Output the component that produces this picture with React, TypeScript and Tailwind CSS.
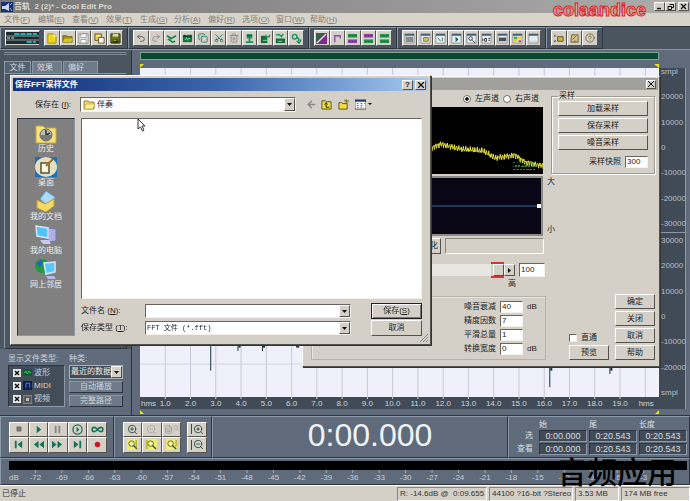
import type { ReactNode } from "react";
import {
  ArrowLeft, CircleHelp, Copy, FileText, Infinity as Loop, Pause, Redo2, Scissors, Square, Trash2, Undo2,
  ZoomIn, ZoomOut, Search,
} from "lucide-react";

const raised = "border border-t-white border-l-white border-b-[#55534e] border-r-[#55534e] bg-[#d4d0c8]";
const sunken = "border border-t-[#66645f] border-l-[#66645f] border-b-[#f4f2ec] border-r-[#f4f2ec] bg-white";
const groove = "border border-t-[#8b98a8] border-l-[#8b98a8] border-b-[#2b343f] border-r-[#2b343f]";
const inset = "border border-t-[#2b343f] border-l-[#2b343f] border-b-[#8b98a8] border-r-[#8b98a8]";

function Svg({ children, size = 11 }: { children: ReactNode; size?: number }) {
  return (
    <svg width={size} height={size} viewBox="0 0 12 12" aria-hidden="true">
      {children}
    </svg>
  );
}

const greenClip = (
  <Svg>
    <rect x="1" y="2" width="10" height="8" fill="#15733f" />
    <path d="M1 4h10M3 2v2M9 2v2" stroke="#0a4022" />
    <path d="M3 7h1l1-2 1 3 1-2h2" stroke="#5fd690" fill="none" />
  </Svg>
);
const mixClip = (
  <Svg>
    <path d="M1 3h7v8H1z" fill="#146c3c" />
    <path d="M6 1l2 3 3-3v4H6z" fill="#1c9a5a" />
    <path d="M3 8h5" stroke="#7fe0a4" />
  </Svg>
);
const insertClip = (
  <Svg>
    <path d="M1 6h10v5H1z" fill="#146c3c" />
    <path d="M1 2h4l2 2 2-3" stroke="#1c9a5a" strokeWidth="1.600" fill="none" />
    <path d="M3 9h5" stroke="#7fe0a4" />
  </Svg>
);
const micClip = (
  <Svg>
    <path d="M3 1h6v5H3zM5 6h2v3H5zM2 9h8v2H2z" fill="#1c9460" />
    <path d="M3 3h6" stroke="#0b4b2c" />
  </Svg>
);

const fileTools: { label: string; icon: ReactNode }[] = [
  { label: "新建", icon: <Svg><path d="M2 1h6l3 3v7H2z" fill="#f0d818" stroke="#9c8a10" /><path d="M8 1v3h3" fill="#fff6a0" /></Svg> },
  { label: "打开", icon: <Svg><path d="M1 3h4l1 1h5v6H1z" fill="#a49016" stroke="#6b5f10" /><path d="M3 6h9l-2 4H1z" fill="#d8c42c" /></Svg> },
  { label: "保存", icon: <Svg><path d="M1 1h10v10H1z" fill="#ececec" stroke="#8b8b8b" /><path d="M3 1h6v4H3zM3 7h6v4H3z" fill="#fff" stroke="#9b9b9b" /></Svg> },
  { label: "另存为", icon: <Svg><path d="M1 1h7v7H1z" fill="#e6cf50" stroke="#5c5120" /><path d="M5 5h6v6H5z" fill="#fff" stroke="#5c5120" /><path d="M3 3h4" stroke="#fff" /></Svg> },
  { label: "全部保存", icon: <Svg><path d="M1 1h10v10H1z" fill="#6e7420" stroke="#2c3010" /><path d="M3 1h6v3H3z" fill="#d8d890" /><path d="M3 7h6v4H3z" fill="#27340c" /><path d="M4 8h3" stroke="#e0dc30" /></Svg> },
];

const editTools: { label: string; icon: ReactNode }[] = [
  { label: "撤消", icon: <Undo2 size={10} color="#555" /> },
  { label: "重做", icon: <Redo2 size={10} color="#888" /> },
  { label: "修剪", icon: <Svg><path d="M1 3l5 3 5-3M6 6l-3 1 4 3 3-1" stroke="#12804e" fill="none" strokeWidth="1.600" /></Svg> },
  { label: "选区", icon: greenClip },
  { label: "复制", icon: <Copy size={10} color="#1c8064" /> },
  { label: "剪切", icon: <Scissors size={10} color="#1c7058" className="-rotate-90" /> },
  { label: "删除", icon: <Trash2 size={10} color="#888" /> },
  { label: "录入", icon: micClip },
  { label: "混合", icon: mixClip },
  { label: "插入", icon: insertClip },
  { label: "转换", icon: <Svg><circle cx="4" cy="4" r="2.500" fill="none" stroke="#1c9460" strokeWidth="1.500" /><path d="M6 5c3 0 3 2 2 4M6 9l3 2 2-4" stroke="#12805a" fill="none" strokeWidth="1.400" /></Svg> },
];

const bars = (a: string, b: string) => (
  <Svg>
    <path d="M1 1h10v4H1z" fill={a} />
    <path d="M1 7h10v4H1z" fill={b} />
    <path d="M2 3h8M2 9h8" stroke="#224438" strokeDasharray="2 1" />
  </Svg>
);
const effectTools: { label: string; icon: ReactNode }[] = [
  { label: "反相", icon: <Svg><path d="M0 0h12v12H0z" fill="#7c2c8c" /><path d="M0 12L12 0H0z" fill="#396048" /><path d="M1 11L11 1" stroke="#f0d8f4" strokeWidth="1.500" /></Svg> },
  { label: "包络", icon: <Svg><path d="M3 10V3h6v3" stroke="#8c4ca8" fill="none" strokeWidth="1.500" /></Svg> },
  { label: "左声道", icon: bars("#289c54", "#9648a8") },
  { label: "右声道", icon: bars("#9648a8", "#289c54") },
  { label: "双声道", icon: bars("#289c54", "#289c54") },
];

const win = (inner: ReactNode) => (
  <Svg>
    <path d="M1 1h10v10H1z" fill="#e9edf0" stroke="#8c959c" />
    <path d="M1 2h10" stroke="#456078" strokeWidth="2" />
    {inner}
  </Svg>
);
const viewTools: { label: string; icon: ReactNode }[] = [
  { label: "文件窗口", icon: win(<path d="M2 4h8v6H2z" fill="#8c8c86" />) },
  { label: "提示", icon: win(<path d="M4 5h5v4H4z" fill="#d8c864" stroke="#807428" />) },
  { label: "播放列表", icon: win(<path d="M3 5l3 4M8 5v4" stroke="#3c7c5c" />) },
  { label: "播放控制", icon: win(<path d="M5 4l3 3-3 3z" fill="#105c5c" />) },
  { label: "缩放", icon: win(<><circle cx="5" cy="6" r="2" fill="none" stroke="#333" /><path d="M7 8l3 3" stroke="#333" /></>) },
  { label: "时间", icon: win(<path d="M2 6v3M4 6h2v3H4zM8 6h2M8 8h2" stroke="#333" fill="none" />) },
  { label: "选择", icon: win(<path d="M2 5h8v4H2z" fill="#4b5052" />) },
  { label: "频谱", icon: win(<><path d="M2 4h4v3H2z" fill="#37b060" /><path d="M6 4h4v3H6z" fill="#e8d41c" /><path d="M2 7h4v3H2z" fill="#e8d41c" /><path d="M7 8h3v2H7z" fill="#d84040" /></>) },
  { label: "状态栏", icon: win(<path d="M2 9h8" stroke="#c8cccf" />) },
];
const helpTools: { label: string; icon: ReactNode }[] = [
  { label: "选项", icon: <Svg><path d="M1 2l2 2M3 2L1 4M1 8l2 2M3 8l-2 2" stroke="#555" /><path d="M5 4h6v5H5z" fill="#ccb83c" stroke="#5c5420" /></Svg> },
  { label: "脚本", icon: <Svg><path d="M3 2h7v8H2z" fill="#d8c088" stroke="#705c30" /><path d="M4 7l4-4M5 9h3" stroke="#705c30" /></Svg> },
  { label: "帮助", icon: <CircleHelp size={10} color="#6a6424" /> },
];

function ToolGroup({ tools, width, before }: { tools: { label: string; icon: ReactNode }[]; width: string; before?: ReactNode }) {
  return (
    <div className={`flex items-center gap-1 px-1 ${groove}`}>
      {before}
      <div className={`flex h-4 ${width}`}>
        {tools.map((t) => (
          <button key={t.label} aria-label={t.label} className={`flex min-w-0 flex-1 items-center justify-center overflow-hidden ${raised}`}>
            {t.icon}
          </button>
        ))}
      </div>
    </div>
  );
}

function TitleBar() {
  return (
    <header className="flex h-[13px] items-center bg-linear-to-r from-[#777] to-[#adadab] px-px">
      <svg width="12" height="10" viewBox="0 0 12 10" aria-hidden="true">
        <path d="M0 0h12v10H0z" fill="#1b2c78" />
        <path d="M1 4h3l4-3v8L4 7H1z" fill="#c8d6ee" />
        <path d="M9 3l2-2M9 6l2 3" stroke="#8ab0ec" />
      </svg>
      <h1 className="ml-px flex-1 whitespace-pre font-bold text-[#dcdad4]">音轨  2 (2)* - Cool Edit Pro</h1>
      <div className="flex">
        {["最小化", "还原", "关闭"].map((label, i) => (
          <button key={label} aria-label={label} className={`flex h-[9px] w-[11px] items-center justify-center ${raised} ${i === 2 ? "ml-0.5" : ""}`}>
            <svg width="7" height="7" viewBox="0 0 7 7" fill="none" stroke="#111" aria-hidden="true">
              {i === 0 && <path d="M1 5.500h4" strokeWidth="1.500" />}
              {i === 1 && <path d="M2.500 1.500h4v3h-2M1 3.500h3.500v3H1z" />}
              {i === 2 && <path d="M1 1l5 5M6 1L1 6" strokeWidth="1.300" />}
            </svg>
          </button>
        ))}
      </div>
    </header>
  );
}

const menus = ["文件(F)", "编辑(E)", "查看(V)", "效果(T)", "生成(G)", "分析(A)", "偏好(R)", "选项(O)", "窗口(W)", "帮助(H)"];

function MenuBar() {
  return (
    <nav className="flex h-[13px] items-center bg-[#d8d4ca] pl-1 text-[#858179]">
      {menus.map((m) => (
        <button key={m} className="w-[34px] shrink-0 whitespace-nowrap text-left">
          {m.slice(0, 3)}<u>{m.slice(3, 4)}</u>)
        </button>
      ))}
    </nav>
  );
}

function Toolbar() {
  return (
    <div className="flex h-[23px] border-t border-[#2b343f] bg-[#4b555f]">
      <ToolGroup
        tools={fileTools}
        width="w-[79px]"
        before={
          <button aria-label="切换多轨" className={`h-4 w-[35px] ${raised}`}>
            <svg width="100%" height="12" viewBox="0 0 32 12" preserveAspectRatio="none" aria-hidden="true">
              <path d="M0 0h32v12H0z" fill="#1d2b30" />
              <path d="M0 4h32M0 8h32" stroke="#8fa0a4" />
              <path d="M8 2h22M20 10h9" stroke="#25b3a8" strokeWidth="2" strokeDasharray="5 1" />
              <path d="M1 6h8" stroke="#ddd" strokeDasharray="3 1" />
            </svg>
          </button>
        }
      />
      <ToolGroup tools={editTools} width="w-[171px]" />
      <ToolGroup tools={effectTools} width="w-[78px]" />
      <ToolGroup tools={viewTools} width="w-[139px]" />
      <ToolGroup tools={helpTools} width="w-[47px]" />
    </div>
  );
}

const fileKinds = [
  { name: "波形", icon: <Svg size={9}><path d="M0 2h12v8H0z" fill="#0b5a2c" /><path d="M1 6h2l1-2 2 4 2-4 1 2h2" stroke="#43d878" fill="none" /></Svg> },
  { name: "MIDI", icon: <Svg size={9}><path d="M0 0h12v12H0z" fill="#0c1c50" /><path d="M4 9V3h5v6" stroke="#7494e0" fill="none" /></Svg> },
  { name: "视频", icon: <Svg size={9}><path d="M0 1h12v10H0z" fill="#555" stroke="#aaa" /><path d="M4 4h4v4H4z" fill="#bbb" /></Svg> },
];

function DropArrow() {
  return (
    <span className={`pointer-events-none flex w-[11px] shrink-0 items-center justify-center self-stretch ${raised}`}>
      <svg width="5" height="3" viewBox="0 0 5 3" aria-hidden="true"><path d="M0 0h5L2.500 3z" fill="#111" /></svg>
    </span>
  );
}

function Organizer() {
  return (
    <aside className="flex w-[132px] shrink-0 flex-col border-r border-[#2b343f] bg-[#4b555f] px-1">
      <div className="my-0.5 h-[3px] border-y border-[#7d8997]" />
      <div className="mt-1 flex h-3 gap-px text-[#d4d8dc]">
        <button className="w-[27px] border border-b-0 border-[#8b98a8] bg-[#566170]">文件</button>
        <button className="w-[30px] border border-b-0 border-[#8b98a8] bg-[#6e7a89] pl-1 text-left">效果</button>
        <button className="w-[35px] border border-b-0 border-[#8b98a8] bg-[#6e7a89] pl-1 text-left">偏好</button>
      </div>
      <div className={`flex-1 bg-[#4b555f] ${groove}`} />
      <div className="-mx-1 flex gap-1 bg-[#5f6b7a] px-2 pt-1 pb-2 text-[#cdd2d8]">
        <div className="w-[57px]">
          <p className="h-3 whitespace-nowrap">显示文件类型:</p>
          <div className={`flex h-[42px] flex-col justify-around bg-[#434c59] px-1 ${inset}`}>
            {fileKinds.map((k) => (
              <label key={k.name} className="flex items-center gap-0.5">
                <input type="checkbox" defaultChecked className="peer sr-only" />
                <svg width="8" height="8" viewBox="0 0 8 8" aria-hidden="true">
                  <path d="M0 0h8v8H0z" fill="#e8e8e4" />
                  <path d="M2 2l4 4M6 2L2 6" stroke="#111" strokeWidth="1.500" />
                </svg>
                {k.icon}
                {k.name}
              </label>
            ))}
          </div>
        </div>
        <div className="w-[54px]">
          <label htmlFor="sort" className="block h-3">种类:</label>
          <div className="flex h-[14px] border border-[#a9b0b8] bg-[#434c59]">
            <select id="sort" className="min-w-0 flex-1 appearance-none overflow-hidden text-clip whitespace-nowrap bg-transparent pl-px text-[#e8eaec]">
              <option>最近的数据</option>
            </select>
            <DropArrow />
          </div>
          <button className={`mt-0.5 block h-3 w-full bg-[#6e7a89] leading-[10px] ${groove}`}>自动播放</button>
          <button className={`mt-0.5 block h-3 w-full bg-[#6e7a89] leading-[10px] ${groove}`}>完整路径</button>
        </div>
      </div>
    </aside>
  );
}

const DURATION = 20.543;
const at = (s: number) => `${(s / DURATION) * 100}%`;
const seconds = Array.from({ length: 20 }, (_, i) => i + 1);
const peaks = [
  { t: 2.8, from: 70, to: 92 }, { t: 3.88, from: 70, to: 86 }, { t: 4.85, from: 70, to: 86 }, { t: 6.2, from: 70, to: 85 },
  { t: 16.22, from: 70, to: 97 }, { t: 18.6, from: 70, to: 93 },
];

function WaveView() {
  return (
    <main className="flex min-w-0 flex-1 flex-col pt-0.5 pl-2">
      <div className="mr-[31px] h-2 border border-[#7ca392] bg-[#0c4830]" />
      <div className="flex h-2 items-end justify-between pr-[31px]">
        <svg width="5" height="4" aria-hidden="true"><path d="M0 0h4L0 4z" fill="#e8e020" /></svg>
        <svg width="5" height="4" aria-hidden="true"><path d="M0 0h5v4z" fill="#e8e020" /></svg>
      </div>
      <div className="flex flex-1">
        <div className="flex min-w-0 flex-1 flex-col">
          <svg className="w-full flex-1 bg-[#f0f0fa]" height="100%" role="img" aria-label="波形">
            {seconds.map((s) => <line key={s} x1={at(s)} x2={at(s)} y1="0" y2="100%" stroke="#c5c8d6" />)}
            {[10, 50, 90].map((y) => <line key={y} x1="0" x2="100%" y1={`${y}%`} y2={`${y}%`} stroke="#d2d4e0" />)}
            {peaks.map((p) => (
              <g key={p.t} stroke="#143440">
                <line x1={at(p.t)} x2={at(p.t)} y1={`${p.from}%`} y2={`${p.to}%`} strokeWidth="1" />
                {p.t > 3 && <line x1={at(p.t + 0.06)} x2={at(p.t + 0.06)} y1={`${p.from}%`} y2={`${Math.min(p.to, p.t > 10 ? 92 : 85)}%`} strokeWidth="2" />}
              </g>
            ))}
          </svg>
          <svg className="h-3 w-full shrink-0 bg-[#414b57]" fill="#d0d4d8" aria-hidden="true">
            <text x="1" y="9">hms</text>
            {seconds.slice(0, 19).map((s) => (
              <g key={s}>
                <line x1={at(s)} x2={at(s)} y1="0" y2="2" stroke="#d0d4d8" />
                <text x={at(s)} y="9" textAnchor="middle">{s}.0</text>
              </g>
            ))}
            <text x="99%" y="9" textAnchor="end">hms</text>
          </svg>
        </div>
        <div className="mr-1 flex w-[27px] shrink-0 flex-col border-r border-[#8b98a8] bg-[#414b57] pb-3 text-[#b8bec6]">
          <div className="flex flex-1 flex-col justify-between border-b border-[#8b98a8] pb-1 pl-0.5 leading-[8px]">
            {["smpl", "20000", "10000", "0", "-10000", "-20000", "-30000"].map((l) => <span key={l}>{l}</span>)}
          </div>
          <div className="flex flex-1 flex-col justify-between pt-1 pl-0.5 leading-[8px]">
            {["30000", "20000", "10000", "0", "-10000", "-20000", "smpl"].map((l) => <span key={l}>{l}</span>)}
          </div>
        </div>
      </div>
      <div className="flex h-1.5 items-center justify-between pr-[31px]">
        <svg width="4" height="4" aria-hidden="true"><path d="M0 0v4h4z" fill="#e8e020" /></svg>
        <svg width="4" height="4" aria-hidden="true"><path d="M4 0v4H0z" fill="#e8e020" /></svg>
      </div>
    </main>
  );
}

const green = "#12745c";
const transport: { label: string; icon: ReactNode }[] = [
  { label: "停止", icon: <Square size={6} fill="#777" color="#777" /> },
  { label: "播放", icon: <Svg><path d="M4 2l5 4-5 4z" fill={green} /></Svg> },
  { label: "暂停", icon: <Svg><path d="M3 2h2v8H3zM7 2h2v8H7z" fill="#888" /></Svg> },
  { label: "播放到结尾", icon: <Svg><circle cx="6" cy="6" r="5" fill="none" stroke={green} strokeWidth="1.400" /><path d="M5 3l3 3-3 3z" fill={green} /></Svg> },
  { label: "循环", icon: <Loop size={13} strokeWidth={3} color={green} /> },
  { label: "到开头", icon: <Svg><path d="M2 2h2v8H2zM10 2v8L5 6z" fill={green} /></Svg> },
  { label: "快退", icon: <Svg><path d="M6 2v8L1 6zM12 2v8L7 6z" fill={green} /></Svg> },
  { label: "快进", icon: <Svg><path d="M0 2v8l5-4zM6 2v8l5-4z" fill={green} /></Svg> },
  { label: "到结尾", icon: <Svg><path d="M8 2h2v8H8zM2 2v8l5-4z" fill={green} /></Svg> },
  { label: "录音", icon: <Svg><circle cx="6" cy="6" r="3" fill="#c81824" /></Svg> },
];
const zoomSel = (d: string) => (
  <span className="flex bg-[#f0ec70]">
    <Svg><circle cx="5" cy="5" r="3" fill="#f8f4a0" stroke="#606020" /><path d="M7 7l4 4" stroke="#225844" strokeWidth="1.500" /><path d={d} stroke="#8c8810" /></Svg>
  </span>
);
const zooms: { label: string; icon: ReactNode }[] = [
  { label: "放大", icon: <ZoomIn size={11} color="#2c5048" /> },
  { label: "缩小", icon: <ZoomOut size={11} color="#aaa" /> },
  { label: "全部", icon: <span className="flex"><FileText size={9} color="#999" /><Search size={6} color="#999" /></span> },
  { label: "选区", icon: zoomSel("M10 1v10") },
  { label: "选区左", icon: zoomSel("M1 1v10") },
  { label: "选区右", icon: zoomSel("M11 1v7") },
];

function Pads({ items, className }: { items: { label: string; icon: ReactNode }[]; className: string }) {
  return (
    <div className={`grid h-[31px] shrink-0 grid-rows-2 ${className}`}>
      {items.map((t) => (
        <button key={t.label} aria-label={t.label} className={`flex min-w-0 items-center justify-center overflow-hidden ${raised}`}>{t.icon}</button>
      ))}
    </div>
  );
}

function ControlDeck() {
  const cell = `h-3 bg-[#414b57] text-center text-[9px] leading-[10px] text-[#d8dce0] ${inset}`;
  return (
    <section className="flex h-[43px] shrink-0 border-t border-[#2b343f]">
      <div className={`flex w-[114px] items-center pl-2 ${groove}`}><Pads items={transport} className="w-[98px] grid-cols-5" /></div>
      <div className={`flex w-[98px] items-center gap-1.5 pl-2 ${groove}`}>
        <Pads items={zooms} className="w-[58px] grid-cols-3" />
        <Pads
          className="w-5 grid-cols-1"
          items={[
            { label: "垂直放大", icon: <><span className="h-2.5 w-0.5 border-l border-[#444]" /><ZoomIn size={11} color="#2c5048" /></> },
            { label: "垂直缩小", icon: <><span className="h-2.5 w-0.5 border-l border-[#444]" /><ZoomOut size={11} color="#2c5048" /></> },
          ]}
        />
      </div>
      <output className={`flex flex-1 items-center justify-center pb-1 pl-5 text-[32px] leading-none text-[#f0f2f6] ${groove}`}>0:00.000</output>
      <div className={`flex w-[182px] items-center pl-1 ${groove}`}>
        <table className="w-full table-fixed border-separate border-spacing-x-0.5 border-spacing-y-px text-[#d8dce0]">
          <thead>
            <tr className="h-2.5 text-left leading-[9px]">
              <td className="w-[22px]" />
              {["始", "尾", "长度"].map((h) => <th key={h} className="p-0 font-normal">{h}</th>)}
            </tr>
          </thead>
          <tbody>
            {["选", "查看"].map((r) => (
              <tr key={r}>
                <th className="p-0 pr-1 text-right font-normal leading-[10px]">{r}</th>
                <td className={cell}>0:00.000</td>
                <td className={cell}>0:20.543</td>
                <td className={cell}>0:20.543</td>
              </tr>
            ))}
          </tbody>
        </table>
      </div>
    </section>
  );
}

const levels = Array.from({ length: 24 }, (_, i) => -72 + i * 3);

function LevelMeter() {
  return (
    <section className={`relative h-[27px] shrink-0 pt-0.5 pr-0.5 pl-2 ${groove}`}>
      <div className="h-[9px] bg-black" />
      <svg className="block h-3 w-full" fill="#c8cdd4" aria-hidden="true">
        <text x="0" y="10">dB</text>
        {levels.map((l, i) => {
          const x = `${3.9 + i * 3.9}%`;
          return (
            <g key={l}>
              <line x1={x} x2={x} y1="0" y2="3" stroke="#a8b0ba" />
              <text x={x} y="10" textAnchor="middle">{l}</text>
            </g>
          );
        })}
      </svg>
      <strong className="absolute -top-px right-3 text-[30px] leading-[30px] font-medium text-black">音频应用</strong>
    </section>
  );
}

function StatusBar() {
  const pane = "border border-t-[#88867f] border-l-[#88867f] border-b-white border-r-white pl-0.5 whitespace-pre";
  return (
    <footer className="flex h-4 shrink-0 items-center gap-0.5 border-t border-white bg-[#d4d0c8] pl-0.5 text-[#333]">
      <span className="flex-1">已停止</span>
      <span className={`w-[90px] ${pane}`}>R: -14.6dB @  0:09.655</span>
      <span className={`w-[84px] ${pane}`}>44100 ?16-bit ?Stereo</span>
      <span className={`w-11 ${pane}`}>3.53 MB</span>
      <span className={`w-[69px] ${pane}`}>174 MB free</span>
    </footer>
  );
}

const envelope = [[0, 42], [40, 36], [80, 40], [121, 41], [130, 37], [150, 42], [173, 44], [185, 51], [205, 48], [215, 55], [233, 59]];
function noiseAt(x: number) {
  const i = Math.max(1, envelope.findIndex((p) => p[0] >= x));
  const [x0, y0] = envelope[i - 1];
  const [x1, y1] = envelope[i];
  return y0 + ((y1 - y0) * (x - x0)) / (x1 - x0) + Math.sin(x * 2.7) * 1.8 + Math.sin(x * 7.1) * 1.6;
}
const noiseTrace = Array.from({ length: 467 }, (_, i) => `${i / 2},${noiseAt(i / 2).toFixed(1)}`).join(" ");
const specks = Array.from({ length: 60 }, (_, i) => ({ x: 203 + ((i * 17) % 23), y: 55 + ((i * i * 7) % 12) }));

function NoiseDialog() {
  const btn = `h-[15px] w-10 ${raised}`;
  const field = `h-3 w-[23px] px-px ${sunken}`;
  return (
    <section role="dialog" aria-label="降噪器" className={`absolute top-[76px] left-[302px] flex w-[358px] flex-col pb-1.5 shadow-[1px_1px_0_#333] ${raised}`}>
      <div className="m-px flex h-3 items-center justify-end bg-[#a2a09d] pr-0.5">
        <button aria-label="关闭" className={`flex h-[9px] w-2.5 items-center justify-center ${raised}`}>
          <svg width="6" height="6" viewBox="0 0 6 6" aria-hidden="true"><path d="M0 0l6 6M6 0L0 6" stroke="#111" /></svg>
        </button>
      </div>
      <div className="flex gap-2 pl-2">
        <div className="w-[232px]">
          <div className="flex h-4 items-center justify-end gap-1 pr-1">
            {["左声道", "右声道"].map((c, i) => (
              <label key={c} className="flex items-center gap-1">
                <input type="radio" name="channel" defaultChecked={i === 0} className="size-2 appearance-none rounded-full border border-[#777] bg-white bg-clip-padding checked:bg-[radial-gradient(#111_35%,#fff_45%)]" />
                {c}
              </label>
            ))}
          </div>
          <svg className="block h-[67px] w-full bg-black" viewBox="0 0 233 67" preserveAspectRatio="none" role="img" aria-label="噪音频谱">
            <polyline points={noiseTrace} fill="none" stroke="#e4e03c" strokeWidth="1" />
            {specks.map((s, i) => <rect key={i} x={s.x} y={s.y} width="1" height="1" fill="#2c8c3c" />)}
          </svg>
        </div>
        <fieldset className="h-[83px] w-[104px] border border-[#9d9a92] px-1.5 shadow-[inset_1px_1px_0_#fff,1px_1px_0_#fff]">
          <legend className="ml-0 px-px leading-[10px]">采样</legend>
          <div className="flex flex-col gap-0.5">
            {["加载采样", "保存采样", "噪音采样"].map((b) => <button key={b} className={`h-[15px] ${raised}`}>{b}</button>)}
            <label className="mt-1 flex items-center justify-end gap-1">采样快照 <input defaultValue="300" className={field} /></label>
          </div>
        </fieldset>
      </div>
      <div className="mt-0.5 flex gap-1 pl-2">
        <svg className="h-[60px] w-[232px] border-2 border-[#8c8a86] bg-[#090716]" role="img" aria-label="降噪曲线">
          <line x1="0" x2="100%" y1="28" y2="28" stroke="#3a64a4" />
          <rect x="224" y="26" width="4" height="4" fill="#fff" />
        </svg>
        <div className="flex flex-col justify-between"><span>大</span><span>小</span></div>
      </div>
      <div className="mt-0.5 flex h-4 w-[241px] items-stretch justify-end gap-1">
        <button className={`w-12 pr-0.5 text-right ${raised}`}>平直化</button>
        <div className="w-[99px] border border-t-[#88867f] border-l-[#88867f] border-b-white border-r-white" />
      </div>
      <div className="mt-2 flex h-4 w-[242px] items-stretch pl-2">
        <div className="flex flex-1 items-center justify-end">
          <span className="h-3 flex-1 bg-[#e8e6e1]" />
          <span className="flex w-[13px] self-stretch border-y-2 border-[#e03030]">
            <span className={`ml-0.5 flex-1 ${raised}`} />
          </span>
        </div>
        <button aria-label="增加" className={`my-0.5 flex w-[11px] items-center justify-center ${raised}`}>
          <svg width="3" height="5" aria-hidden="true"><path d="M0 0l3 2.500L0 5z" fill="#111" /></svg>
        </button>
        <input aria-label="降噪级别" defaultValue="100" className={`my-px ml-1 w-[26px] px-px ${sunken}`} />
      </div>
      <div className="h-3 w-[213px] text-right">高</div>
      <div className="mt-1 flex items-end pl-2">
        <div className="flex w-[235px] flex-col items-end gap-0.5 border border-[#b5b2aa] py-1 pr-2 shadow-[inset_1px_1px_0_#e8e6e0]">
          {[["噪音衰减", "40", "dB"], ["精度因数", "7", ""], ["平滑总量", "1", ""], ["转换宽度", "0", "dB"]].map(([l, v, u]) => (
            <div key={l} className="flex items-center">
              <label htmlFor={`p-${l}`} className="mr-1">{l}</label>
              <input id={`p-${l}`} defaultValue={v} className={field} />
              <span className="w-3.5 pl-1">{u}</span>
            </div>
          ))}
        </div>
        <div className="ml-[23px] flex flex-col gap-0.5">
          <label className="flex h-2.5 items-center gap-1">
            <input type="checkbox" className={`size-2 appearance-none ${sunken}`} />直通
          </label>
          <button className={btn}>预览</button>
        </div>
        <div className="ml-1.5 flex flex-col gap-0.5">
          {["确定", "关闭", "取消", "帮助"].map((b) => <button key={b} className={btn}>{b}</button>)}
        </div>
      </div>
    </section>
  );
}

const places: { name: string; icon: ReactNode }[] = [
  { name: "历史", icon: <><path d="M1 3h7l2 2h11v15H1z" fill="#f6e27c" stroke="#c4a63c" /><circle cx="11" cy="12" r="6" fill="#b8bcb4" stroke="#666" /><path d="M11 12V7M11 12l4-2" stroke="#333" strokeWidth="1.500" /><path d="M5 12a6 6 0 0 0 12 0z" fill="#777c74" /></> },
  { name: "桌面", icon: <><path d="M0 0h22v20H0z" fill="#1c70b8" /><ellipse cx="11" cy="10" rx="11" ry="10" fill="#e4e0c0" /><path d="M6 6h8v10H6z" fill="#fbf8dc" stroke="#55513c" strokeWidth="1.500" /><path d="M11 9l7-7" stroke="#9b7420" strokeWidth="2" /></> },
  { name: "我的文档", icon: <><path d="M5 8l6-8 9 6-6 10z" fill="#a8dcf8" stroke="#5ca0d0" /><path d="M2 9l8 4 9-5v7l-8 6-9-4z" fill="#f6da68" stroke="#c49c28" /></> },
  { name: "我的电脑", icon: <><path d="M13 3l8 1v12l-8 1z" fill="#b0b0e4" stroke="#7474bc" /><path d="M1 1l12 2v10L2 11z" fill="#50c4f8" stroke="#d8e4fc" strokeWidth="1.500" /><path d="M5 15h9l2 4H8z" fill="#c8c8f0" /></> },
  { name: "网上邻居", icon: <><circle cx="7" cy="7" r="7" fill="#209c40" /><path d="M1 4l5-3 2 4-4 3z" fill="#2860c8" /><path d="M9 4l11-1v10l-9 2z" fill="#58c8f8" stroke="#d8e8fc" strokeWidth="1.500" /><path d="M11 17h8l2 3h-8z" fill="#b8b8ec" /></> },
];

function SaveDialog() {
  return (
    <section role="dialog" aria-label="保存FFT采样文件" className={`absolute top-[75px] left-[10px] w-[421px] p-0.5 shadow-[1px_1px_0_#333] ${raised}`}>
      <div className="flex h-[13px] items-center gap-0.5 bg-linear-to-r from-[#14307c] via-[#3c66ac] to-[#a6caf0] px-0.5">
        <h2 className="flex-1 font-bold text-white">保存FFT采样文件</h2>
        <button aria-label="帮助" className={`flex h-2.5 w-[11px] items-center justify-center font-bold leading-none ${raised}`}>?</button>
        <button aria-label="关闭" className={`flex h-2.5 w-[11px] items-center justify-center ${raised}`}>
          <svg width="6" height="6" viewBox="0 0 6 6" aria-hidden="true"><path d="M0 0l6 6M6 0L0 6" stroke="#111" strokeWidth="1.300" /></svg>
        </button>
      </div>
      <div className="mt-1.5 flex items-center pl-[22px]">
        <label htmlFor="folder" className="w-[45px] whitespace-nowrap">保存在 (<u>I</u>):</label>
        <div className={`flex h-[15px] w-[216px] items-center ${sunken}`}>
          <svg className="mx-0.5" width="12" height="10" viewBox="0 0 12 10" aria-hidden="true"><path d="M1 1h4l1 1h5v7H1z" fill="#f4dc60" stroke="#a08420" /><path d="M3 4h9l-2 5H1z" fill="#fcee9c" stroke="#a08420" strokeWidth=".5" /></svg>
          <select id="folder" className="flex-1 appearance-none bg-transparent"><option>伴奏</option></select>
          <DropArrow />
        </div>
        <div className="ml-2.5 flex items-center gap-1">
          <button aria-label="后退"><ArrowLeft size={11} color="#888" strokeWidth={3} /></button>
          <button aria-label="向上一级"><Svg><path d="M1 2h4l1 1h5v8H1z" fill="#f0e048" stroke="#554c10" /><path d="M4 6l1.500-2L7 6M5.500 5v4H9" stroke="#111" fill="none" /></Svg></button>
          <button aria-label="新建文件夹" className="ml-0.5"><Svg><path d="M1 4h3l1 1h5v6H1z" fill="#f0e048" stroke="#554c10" /><path d="M9 0v5M7 2h5M7 1l4 3" stroke="#807410" /></Svg></button>
          <button aria-label="查看" className="ml-0.5 flex items-center gap-0.5">
            <Svg><path d="M0 1h12v10H0z" fill="#fff" stroke="#444" /><path d="M0 2h12" stroke="#20407c" strokeWidth="2" /><path d="M2 5h2M6 5h2M10 5h1M2 7h2M6 7h2M2 9h2M6 9h2" stroke="#3868a8" /></Svg>
            <svg width="4" height="3" aria-hidden="true"><path d="M0 0h4L2 2z" fill="#111" /></svg>
          </button>
        </div>
      </div>
      <div className="mt-1.5 flex gap-1.5 pr-1.5 pl-1">
        <nav className={`mb-1.5 flex h-[218px] w-[58px] shrink-0 flex-col items-center bg-[#808080] pt-1 text-white ${inset}`}>
          {places.map((p) => (
            <button key={p.name} className="flex h-[34px] flex-col items-center text-[8px] leading-[10px] text-[#eee]">
              <svg width="22" height="21" viewBox="0 0 22 21" aria-hidden="true">{p.icon}</svg>
              {p.name}
            </button>
          ))}
        </nav>
        <div className="flex-1">
          <div className={`h-[181px] ${sunken}`} />
          <form className="mt-1 grid grid-cols-[64px_206px_1fr] items-center gap-y-px">
            <label htmlFor="fname">文件名 (<u>N</u>):</label>
            <div className={`flex h-[14px] ${sunken}`}><input id="fname" autoFocus className="min-w-0 flex-1 px-px outline-none" /><DropArrow /></div>
            <button type="button" className="ml-auto h-4 w-[51px] border border-[#222] bg-[#d4d0c8] shadow-[inset_1px_1px_0_#fff,inset_-1px_-1px_0_#777]">保存(<u>S</u>)</button>
            <label htmlFor="ftype">保存类型 (<u>T</u>):</label>
            <div className={`flex h-[14px] ${sunken}`}>
              <select id="ftype" className="flex-1 appearance-none pl-px font-['Liberation_Mono','Noto_Sans_CJK_SC',monospace] text-[7px]"><option>FFT 文件 (*.fft)</option></select>
              <DropArrow />
            </div>
            <button type="button" className={`ml-auto h-4 w-[51px] ${raised}`}>取消</button>
          </form>
        </div>
      </div>
      <svg className="absolute right-0.5 bottom-0.5" width="8" height="8" aria-hidden="true"><path d="M0 8l8-8M3 8l5-5M6 8l2-2" stroke="#888" /></svg>
    </section>
  );
}

export default function App() {
  return (
    <div lang="zh" className="relative flex min-h-screen w-full flex-col overflow-hidden bg-[#5f6b7a] font-['Liberation_Sans','Noto_Sans_CJK_SC',sans-serif] text-[8px] leading-[12px] text-[#1c1c1c]">
      <TitleBar />
      <MenuBar />
      <Toolbar />
      <div className="flex flex-1 border-t border-[#8b98a8]">
        <Organizer />
        <WaveView />
      </div>
      <ControlDeck />
      <LevelMeter />
      <StatusBar />
      <NoiseDialog />
      <SaveDialog />
      <svg className="absolute top-[118px] left-[137px]" width="9" height="14" viewBox="0 0 9 14" aria-hidden="true">
        <path d="M1 1v10l2.500-2 2 4 1.500-1-2-4h3z" fill="#fff" stroke="#333" />
      </svg>
      <span className="absolute top-0 left-[553px] font-['Liberation_Sans',sans-serif] text-[18px] leading-[20px] font-bold text-[#d8b0b0] [-webkit-text-stroke:1px_#e01c24]">colaandice</span>
    </div>
  );
}
